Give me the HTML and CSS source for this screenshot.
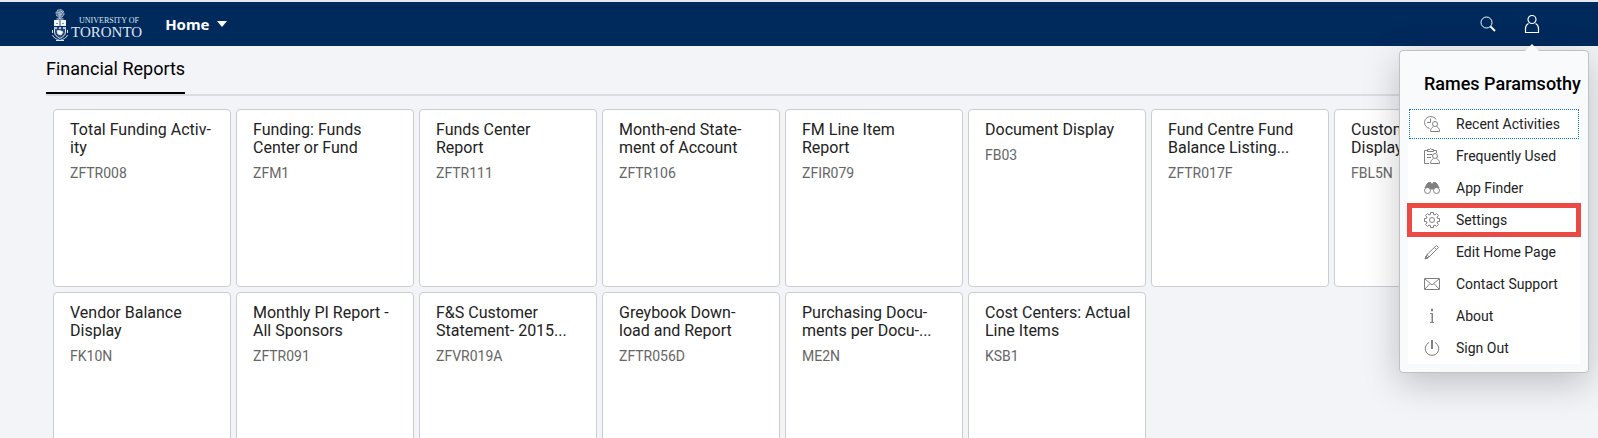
FILE: index.html
```html
<!DOCTYPE html>
<html lang="en">
<head>
    <meta charset="UTF-8">
    <meta name="viewport" content="width=device-width, initial-scale=1.0">
    <title>Home</title>
    <link rel="stylesheet" href="styles.css">
</head>
<body>
    <header class="shell-header">
        <a class="logo" href="#" aria-label="University of Toronto">
            <svg class="crest" viewBox="0 0 16 34" width="16" height="34" fill="none" stroke="#dfe6ee">
                <circle cx="8" cy="5.500" r="4" fill="#5c789b" stroke="#b9c6d6" stroke-dasharray="2 1"/>
                <path d="M5 4l2 1M9 3l2 2M6 7l4-1M8 3v8" stroke="#b9c6d6"/>
                <path d="M4.500 11h7" stroke-width="1"/>
                <path d="M2 12h12v6H2z" fill="#f4f7fa" stroke="none"/>
                <path d="M4 15.500h2M10 15.500h2" stroke="#7f96b2"/>
                <path d="M8 12v6" stroke="#35567f"/>
                <path d="M2.500 19v5c0 3 2.500 5 5.500 6.500 3-1.500 5.500-3.500 5.500-6.500v-5" fill="#23477a"/>
                <path d="M2 19h3v2H2zM7 19h2v2H7zM11 19h3v2h-3z" fill="#b9c6d6" stroke="none"/>
                <path d="M5 23c2-1 4 0 6 1l-2 3-3-1z" fill="#fff"/>
                <path d="M.5 22v3M15.500 22v3M.5 27c1 3 4 4 7.500 5.500 3.500-1.500 6.500-2.500 7.500-5.500M4 32.500h8"/>
            </svg>
            <span class="logo-text">
                <span class="logo-small">UNIVERSITY OF</span>
                <span class="logo-big">TORONTO</span>
            </span>
        </a>
        <button class="home-button" type="button">Home
            <svg viewBox="0 0 10 6" width="10" height="6"><path d="M0 0h10L5 6z" fill="#fff"/></svg>
        </button>
        <div class="header-actions">
            <button class="icon-button" type="button" aria-label="Search">
                <svg viewBox="0 0 16 16" width="16" height="16" fill="none" stroke="#fff">
                    <circle cx="6.500" cy="6.500" r="5.500"/>
                    <path d="M10.500 10.500L15 15" stroke-width="2"/>
                </svg>
            </button>
            <div class="user">
                <button class="icon-button" type="button" aria-label="User menu">
                    <svg viewBox="0 0 16 18" width="16" height="18" fill="none" stroke="#fff" stroke-width="1.200">
                        <circle cx="8" cy="4.500" r="4"/>
                        <path d="M4.500 8.500c-2 1-3 3-3 5v4h13v-4c0-2-1-4-3-5"/>
                    </svg>
                </button>
                <div class="user-menu">
                    <h2>Rames Paramsothy</h2>
                    <ul>
                        <li><button class="menu-item focused" type="button">
                            <svg viewBox="0 0 16 16"><path d="M5.500 12.500C2.500 11.500.5 9.500.5 6.500c0-3 2.500-6 6-6 2.500 0 4.500 1 5.500 3M6.500 2.500v4H3"/><circle cx="11" cy="8" r="2.500"/><path d="M6.500 15.500c0-2.500 1-3.500 3-5M12.500 10.500c2 1 3 2.500 3 5h-9"/></svg>
                            Recent Activities</button></li>
                        <li><button class="menu-item" type="button">
                            <svg viewBox="0 0 16 16"><path d="M5 15.500H.5v-13H3M10 2.500h2.500V5M3.500 3.500v-2h2l1-1 1 1h2v2zM3 6.500h5M3 9.500h4"/><circle cx="11" cy="8" r="2.500"/><path d="M6.500 15.500c0-2.500 1-3.500 3-5M12.500 10.500c2 1 3 2.500 3 5h-9"/></svg>
                            Frequently Used</button></li>
                        <li><button class="menu-item" type="button">
                            <svg viewBox="0 0 16 16"><circle cx="3.500" cy="10.500" r="3"/><circle cx="12.500" cy="10.500" r="3"/><path d="M1 8l2-4 1.500-1.500h2L7.500 4h1l1-1.500h2L13 4l2 4c-2-1.500-4.500-1-5.500 1h-3C5.500 7 3 6.500 1 8z" fill="#808080"/></svg>
                            App Finder</button></li>
                        <li><button class="menu-item marked" type="button">
                            <svg viewBox="0 0 16 16"><path d="M6.500.5h3v2l1.500.5 1.500-1.500 2 2L13 5l.5 1.500h2v3h-2L13 11l1.500 1.500-2 2L11 13l-1.500.5v2h-3v-2L5 13l-1.500 1.500-2-2L3 11l-.5-1.500h-2v-3h2L3 5 1.500 3.500l2-2L5 3l1.500-.5z"/><circle cx="8" cy="8" r="2.500"/></svg>
                            Settings</button></li>
                        <li><button class="menu-item" type="button">
                            <svg viewBox="0 0 16 16"><path d="M1.500 14.500l1.500-4L12.500 1.500l2 2L5 13zM10.500 3.500l2 2M3 10.500L5 13"/><path d="M1 15l1-3 2 2z" fill="#808080"/></svg>
                            Edit Home Page</button></li>
                        <li><button class="menu-item" type="button">
                            <svg viewBox="0 0 16 16"><path d="M.5 2.500h15v11H.5zM1 3l7 6 7-6M1 13l5-5.500M15 13l-5-5.500"/></svg>
                            Contact Support</button></li>
                        <li><button class="menu-item" type="button">
                            <svg viewBox="0 0 16 16"><path d="M7.500 1h1v2h-1zM6 5.500h2.500v9M6 14.500h4M8 5.500v9"/></svg>
                            About</button></li>
                        <li><button class="menu-item" type="button">
                            <svg viewBox="0 0 16 16"><path d="M5 2.500a6.800 6.800 0 1 0 6 0"/><path d="M8 0v9" stroke-width="2"/></svg>
                            Sign Out</button></li>
                    </ul>
                </div>
            </div>
        </div>
    </header>

    <nav class="tabs">
        <a class="tab" href="#">Financial Reports</a>
    </nav>

    <main class="tiles">
        <a class="tile" href="#"><h3>Total Funding Activ&shy;ity</h3><p>ZFTR008</p></a>
        <a class="tile" href="#"><h3>Funding: Funds Center or Fund</h3><p>ZFM1</p></a>
        <a class="tile" href="#"><h3>Funds Center<br>Report</h3><p>ZFTR111</p></a>
        <a class="tile" href="#"><h3>Month-end State&shy;ment of Account</h3><p>ZFTR106</p></a>
        <a class="tile" href="#"><h3>FM Line Item<br>Report</h3><p>ZFIR079</p></a>
        <a class="tile" href="#"><h3>Document Display</h3><p>FB03</p></a>
        <a class="tile" href="#"><h3>Fund Centre Fund Balance Listing...</h3><p>ZFTR017F</p></a>
        <a class="tile" href="#"><h3>Customer<br>Display</h3><p>FBL5N</p></a>
        <a class="tile" href="#"><h3>Vendor Balance Display</h3><p>FK10N</p></a>
        <a class="tile" href="#"><h3>Monthly PI Report - All Sponsors</h3><p>ZFTR091</p></a>
        <a class="tile" href="#"><h3>F&amp;S Customer Statement- 2015...</h3><p>ZFVR019A</p></a>
        <a class="tile" href="#"><h3>Greybook Down-<br>load and Report</h3><p>ZFTR056D</p></a>
        <a class="tile" href="#"><h3>Purchasing Docu&shy;ments per Docu-...</h3><p>ME2N</p></a>
        <a class="tile" href="#"><h3>Cost Centers: Actual Line Items</h3><p>KSB1</p></a>
    </main>
</body>
</html>
```
FILE: styles.css
```css
* {
    box-sizing: border-box;
}
body {
    margin: 0;
    height: 100vh;
    overflow: hidden;
    font-family: Roboto, Arial, sans-serif;
    background-color: #f3f4f8;
    color: #222;
}
h2, h3, p, ul {
    margin: 0;
    padding: 0;
    font-weight: normal;
}
ul {
    list-style: none;
}
a {
    color: inherit;
    text-decoration: none;
}
button {
    font-family: inherit;
    border: none;
    background: none;
    padding: 0;
    cursor: pointer;
}
.shell-header {
    display: flex;
    align-items: center;
    height: 46px;
    padding: 0 48px 0 52px;
    background: #00295c;
    border-top: 2px solid #e6e9ee;
    color: white;
}
.logo {
    display: flex;
    align-items: center;
    gap: 3px;
    padding-top: 2px;
}
.logo-text {
    display: flex;
    flex-direction: column;
    padding-top: 6px;
    font-family: "Liberation Serif", serif;
    color: #dfe6ee;
}
.logo-small {
    font-size: 8px;
    line-height: 8px;
    padding-left: 8px;
}
.logo-big {
    font-size: 15px;
    line-height: 14px;
}
.home-button {
    display: flex;
    align-items: center;
    gap: 7px;
    margin-left: 23px;
    font-family: "Noto Sans", sans-serif;
    font-size: 15px;
    font-weight: bold;
    color: white;
}
.header-actions {
    display: flex;
    align-items: center;
    gap: 8px;
    margin-left: auto;
}
.icon-button {
    display: flex;
    align-items: center;
    justify-content: center;
    width: 36px;
    height: 36px;
}
.user {
    position: relative;
}
.user-menu {
    position: absolute;
    top: 44px;
    right: -39px;
    width: 190px;
    padding: 17px 8px 8px;
    background: #f9fafc;
    border: 1px solid #bfc1c5;
    border-radius: 4px;
    box-shadow: 0 10px 36px rgba(0,0,0,0.22);
}
.user-menu::before {
    content: "";
    position: absolute;
    top: -7px;
    right: 49px;
    border: 7px solid transparent;
    border-top: none;
    border-bottom-color: #f9fafc;
}
.user-menu h2 {
    padding: 0 0 8px 16px;
    font-size: 18px;
    line-height: 32px;
    font-weight: 500;
    color: black;
    white-space: nowrap;
}
.user-menu ul {
    background: white;
}
.menu-item {
    display: flex;
    align-items: center;
    gap: 16px;
    width: 100%;
    height: 32px;
    padding-left: 16px;
    font-size: 14px;
    color: #222;
    white-space: nowrap;
}
.menu-item svg {
    width: 16px;
    height: 16px;
    fill: none;
    stroke: #808080;
}
.menu-item.focused {
    outline: 1px dotted #0070d2;
    outline-offset: -2px;
}
.menu-item.marked {
    outline: 5px solid #eb4a44;
    outline-offset: -4px;
}
.tabs {
    display: flex;
    margin: 0 46px;
    border-bottom: 2px solid #dcdde0;
}
.tab {
    height: 48px;
    padding-top: 11px;
    border-bottom: 2px solid black;
    font-size: 18px;
    line-height: 24px;
    color: black;
}
.tiles {
    display: grid;
    grid-template-columns: repeat(auto-fill, 178px);
    gap: 5px;
    padding: 13px 46px 0 53px;
}
.tile {
    height: 178px;
    padding: 11px 14px 11px 16px;
    background: white;
    border: 1px solid #cccdd1;
    border-radius: 4px;
}
.tile h3 {
    font-size: 16px;
    line-height: 18px;
}
.tile p {
    margin-top: 8px;
    font-size: 14px;
    line-height: 16px;
    color: #666;
}
```
